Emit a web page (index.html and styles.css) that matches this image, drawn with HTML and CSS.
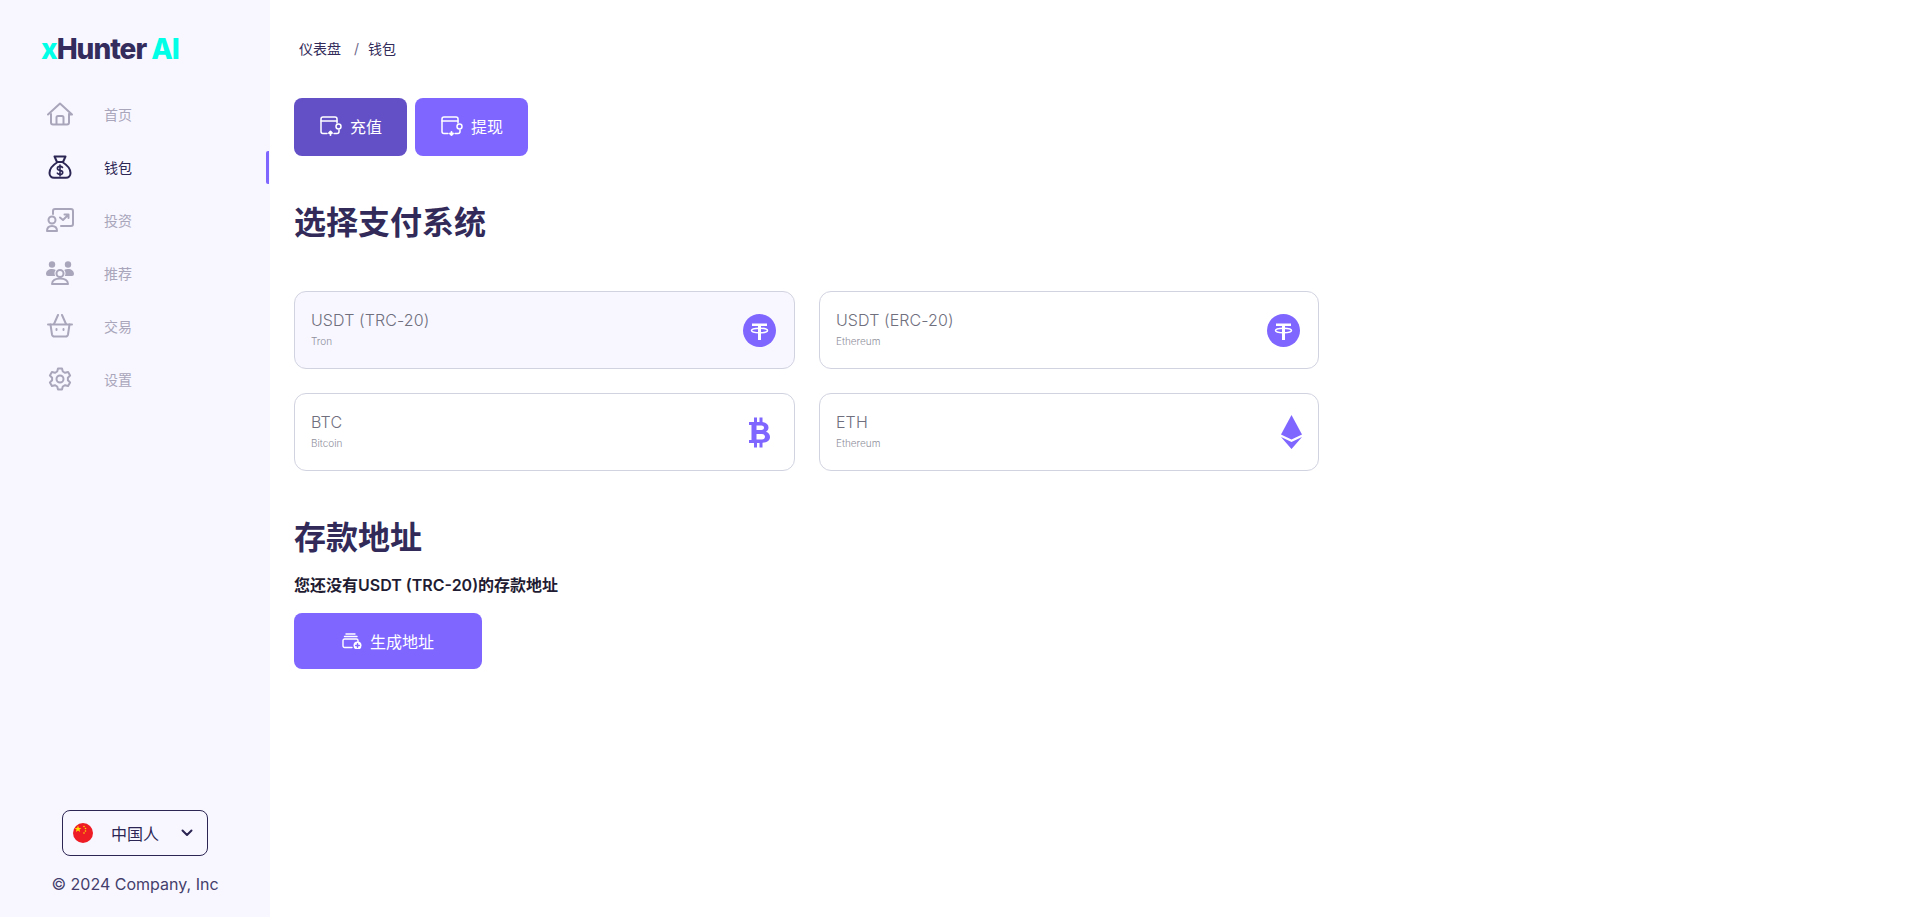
FILE: index.html
```html
<!DOCTYPE html>
<html lang="zh">
<head>
    <meta charset="UTF-8">
    <meta name="viewport" content="width=device-width, initial-scale=1.0">
    <title>xHunter AI - 钱包</title>
    <link rel="stylesheet" href="styles.css">
</head>
<body>
    <aside class="sidebar">
        <div class="logo"><span class="logo-x">x</span>Hunter <span class="logo-ai">AI</span></div>
        <nav class="nav">
            <a class="nav-item">
                <svg class="nav-icon" viewBox="0 0 28 24" fill="none" stroke="currentColor" stroke-width="2" stroke-linejoin="round" stroke-linecap="round">
                    <path d="M2 12.500 14 1.500l12 11h-3"/>
                    <path d="M5 12v8.500a2 2 0 0 0 2 2h14a2 2 0 0 0 2-2V12"/>
                    <path d="M10.500 22v-6.500a1.500 1.500 0 0 1 1.500-1.500h4a1.500 1.500 0 0 1 1.500 1.500V22"/>
                </svg>
                <span>首页</span>
            </a>
            <a class="nav-item active">
                <svg class="nav-icon" viewBox="0 0 28 24" fill="none" stroke="currentColor" stroke-width="2" stroke-linejoin="round" stroke-linecap="round">
                    <path d="M8.500 1.500h11l-2.500 5.500h-6z"/>
                    <path d="M11 7.500C7 10 3.500 14 3.500 18c0 3 2 4.800 4.500 4.800h12c2.500 0 4.500-1.800 4.500-4.800 0-4-3.500-8-7.500-10.500"/>
                    <path d="M16.500 12.500c-.5-.8-1.400-1.100-2.500-1.100-1.500 0-2.600.8-2.600 2 0 2.700 5.300 1.300 5.300 4 0 1.200-1.200 2-2.700 2-1.200 0-2.200-.4-2.700-1.200M14 10v11" stroke-width="1.600"/>
                </svg>
                <span>钱包</span>
            </a>
            <a class="nav-item">
                <svg class="nav-icon" viewBox="0 0 28 24" fill="none" stroke="currentColor" stroke-width="2" stroke-linejoin="round" stroke-linecap="round">
                    <path d="M7 6V3a2 2 0 0 1 2-2h16a2 2 0 0 1 2 2v13a2 2 0 0 1-2 2H15"/>
                    <circle cx="6" cy="12" r="3.500"/>
                    <path d="M1 23c0-3.500 2-5 5-5s5 1.500 5 5z"/>
                    <path d="M14 9.500l3 2.500 5-5M18.500 6.500H22.500V10"/>
                </svg>
                <span>投资</span>
            </a>
            <a class="nav-item">
                <svg class="nav-icon" viewBox="0 0 28 24" fill="currentColor">
                    <circle cx="6" cy="3.500" r="3.200"/>
                    <circle cx="22" cy="3.500" r="3.200"/>
                    <path d="M0 13c0-3 2.500-5 6-5 1.500 0 2.800.4 3.800 1-.9 1-1.300 2.100-1.300 3.500 0 .9.300 1.700.7 2.500H2a2 2 0 0 1-2-2z"/>
                    <path d="M28 13c0-3-2.500-5-6-5-1.500 0-2.800.4-3.800 1 .9 1 1.300 2.100 1.300 3.500 0 .9-.3 1.700-.7 2.500H26a2 2 0 0 0 2-2z"/>
                    <circle cx="14" cy="12.500" r="3.500" fill="none" stroke="currentColor" stroke-width="2"/>
                    <path d="M6 23c0-3.500 3.500-5.500 8-5.500s8 2 8 5.500z" fill="none" stroke="currentColor" stroke-width="2" stroke-linejoin="round"/>
                </svg>
                <span>推荐</span>
            </a>
            <a class="nav-item">
                <svg class="nav-icon" viewBox="0 0 28 24" fill="none" stroke="currentColor" stroke-width="2" stroke-linejoin="round" stroke-linecap="round">
                    <path d="M2 10.500h24"/>
                    <path d="M4.500 10.500 6 20.500a2.500 2.500 0 0 0 2.500 2h11a2.500 2.500 0 0 0 2.500-2l1.500-10"/>
                    <path d="M8 10 12 1M20 10 16 1"/>
                    <path d="M10.500 15v1M17.500 15v1"/>
                </svg>
                <span>交易</span>
            </a>
            <a class="nav-item">
                <svg class="nav-icon" viewBox="0 0 28 24" fill="none" stroke="currentColor" stroke-width="2" stroke-linejoin="round">
                    <circle cx="14" cy="12" r="3.500"/>
                    <path d="M12 1.500h4l.8 3 2.300 1.300 3-.8 2 3.500-2.200 2.200v2.600l2.200 2.200-2 3.500-3-.8-2.300 1.300-.8 3h-4l-.8-3-2.300-1.300-3 .8-2-3.500 2.200-2.200v-2.600L3.900 8.500l2-3.500 3 .8 2.300-1.300z"/>
                </svg>
                <span>设置</span>
            </a>
        </nav>
        <div class="sidebar-footer">
            <button class="lang-select">
                <svg class="flag" viewBox="0 0 20 20">
                    <circle cx="10" cy="10" r="10" fill="#ee1c25"/>
                    <path d="M5 2.500l.9 2.500h2.500l-2 1.500.8 2.500L5 7.500 2.800 9l.8-2.500-2-1.500h2.500z" fill="#ffde00"/>
                    <circle cx="11" cy="3.500" r=".8" fill="#ffde00"/>
                    <circle cx="12.500" cy="5.500" r=".8" fill="#ffde00"/>
                    <circle cx="12.500" cy="8" r=".8" fill="#ffde00"/>
                    <circle cx="11" cy="10" r=".8" fill="#ffde00"/>
                </svg>
                <span class="lang-name">中国人</span>
                <svg class="chevron" viewBox="0 0 12 8" fill="none" stroke="currentColor" stroke-width="2" stroke-linecap="round" stroke-linejoin="round">
                    <path d="M1.500 1.500 6 6l4.500-4.500"/>
                </svg>
            </button>
            <p class="copyright">© 2024 Company, Inc</p>
        </div>
    </aside>

    <main class="content">
        <div class="breadcrumb">
            <span>仪表盘</span>
            <span class="crumb-sep">/</span>
            <span>钱包</span>
        </div>

        <div class="tabs">
            <button class="btn btn-tab btn-dark">
                <svg class="btn-icon" viewBox="0 0 22 20" fill="none" stroke="currentColor" stroke-width="1.500" stroke-linecap="round" stroke-linejoin="round">
                    <path d="M7 17.500H3A2 2 0 0 1 1 15.500V3A2 2 0 0 1 3 1h12a2 2 0 0 1 2 2v4"/>
                    <path d="M1 5h16"/>
                    <path d="M14 17.500h3a2 2 0 0 0 2-2V14"/>
                    <circle cx="18.500" cy="10.500" r="2.500"/>
                    <path d="M10.500 19v-3M9 17l1.500-1.500L12 17" stroke-width="1.800"/>
                </svg>
                <span>充值</span>
            </button>
            <button class="btn btn-tab">
                <svg class="btn-icon" viewBox="0 0 22 20" fill="none" stroke="currentColor" stroke-width="1.500" stroke-linecap="round" stroke-linejoin="round">
                    <path d="M7 17.500H3A2 2 0 0 1 1 15.500V3A2 2 0 0 1 3 1h12a2 2 0 0 1 2 2v4"/>
                    <path d="M1 5h16"/>
                    <path d="M14 17.500h3a2 2 0 0 0 2-2V14"/>
                    <circle cx="18.500" cy="10.500" r="2.500"/>
                    <path d="M10.500 16v3M9 17.500l1.500 1.500 1.500-1.500" stroke-width="1.800"/>
                </svg>
                <span>提现</span>
            </button>
        </div>

        <h2 class="section-title">选择支付系统</h2>

        <div class="pay-grid">
            <div class="pay-card selected">
                <div class="pay-text">
                    <div class="pay-name">USDT (TRC-20)</div>
                    <div class="pay-net">Tron</div>
                </div>
                <svg class="pay-icon" viewBox="0 0 33 33">
                    <circle cx="16.500" cy="16.500" r="16.500" fill="#7f66ff"/>
                    <path d="M9 9.500h15v2.500h-6v14h-3V12H9z" fill="#fff"/>
                    <ellipse cx="16.500" cy="16.500" rx="8" ry="2.300" fill="none" stroke="#fff" stroke-width="1.500"/>
                </svg>
            </div>
            <div class="pay-card">
                <div class="pay-text">
                    <div class="pay-name">USDT (ERC-20)</div>
                    <div class="pay-net">Ethereum</div>
                </div>
                <svg class="pay-icon" viewBox="0 0 33 33">
                    <circle cx="16.500" cy="16.500" r="16.500" fill="#7f66ff"/>
                    <path d="M9 9.500h15v2.500h-6v14h-3V12H9z" fill="#fff"/>
                    <ellipse cx="16.500" cy="16.500" rx="8" ry="2.300" fill="none" stroke="#fff" stroke-width="1.500"/>
                </svg>
            </div>
            <div class="pay-card">
                <div class="pay-text">
                    <div class="pay-name">BTC</div>
                    <div class="pay-net">Bitcoin</div>
                </div>
                <svg class="pay-icon" viewBox="0 0 33 33">
                    <path fill-rule="evenodd" d="M11 1.500h3V6h2.500V1.500h3V6c4 .6 6 2.800 6 5.500 0 2-1 3.500-2.500 4.300 2.500.8 4 2.700 4 5.200 0 3.500-2.700 5.500-7.500 5.800v4.700h-3V27H14v4.500h-3V27H6v-3h2.500V9H6V6h5zM13.500 9.500V14h5c1.500 0 2.500-1 2.500-2.250S20 9.500 18.500 9.500zM13.500 18v5.500H19c1.700 0 3-1.200 3-2.750S20.700 18 19 18z" fill="#7f66ff"/>
                </svg>
            </div>
            <div class="pay-card">
                <div class="pay-text">
                    <div class="pay-name">ETH</div>
                    <div class="pay-net">Ethereum</div>
                </div>
                <svg class="pay-icon eth" viewBox="0 0 21 34">
                    <path d="M10.500 0 21 19.500 10.500 24.500 0 19.500z" fill="#7f66ff"/>
                    <path d="M0 22 10.500 27 21 22 10.500 34z" fill="#7f66ff"/>
                </svg>
            </div>
        </div>

        <h2 class="section-title">存款地址</h2>
        <p class="notice">您还没有USDT (TRC-20)的存款地址</p>
        <button class="btn btn-generate">
            <svg class="btn-icon-sm" viewBox="0 0 20 16" fill="none" stroke="currentColor" stroke-width="1.400" stroke-linecap="round" stroke-linejoin="round">
                <path d="M4 1h9M2.500 3.500H15"/>
                <path d="M10 14.500H2.500A1.500 1.500 0 0 1 1 13V7.500A1.500 1.500 0 0 1 2.500 6h12A1.500 1.500 0 0 1 16 7.500V9"/>
                <circle cx="15.500" cy="12.500" r="4" fill="#fff" stroke="none"/>
                <path d="M15.500 10.700v3.600M13.700 12.500h3.600" stroke="#7f66ff"/>
            </svg>
            <span>生成地址</span>
        </button>
    </main>
</body>
</html>
```

FILE: styles.css
```css
* {
    box-sizing: border-box;
}

body {
    margin: 0;
    height: 100vh;
    display: flex;
    background-color: #fff;
    color: #322b5a;
    font-family: Inter, 'Noto Sans CJK SC', sans-serif;
    overflow: hidden;
}

button {
    font-family: inherit;
    cursor: pointer;
}

/* 侧边栏 */
.sidebar {
    width: 270px;
    flex-shrink: 0;
    background-color: #f8f7ff;
    display: flex;
    flex-direction: column;
}

.logo {
    margin: 31px 0 0 41px;
    height: 36px;
    font-family: Inter, sans-serif;
    font-size: 28px;
    font-weight: 800;
    line-height: 36px;
    letter-spacing: -1px;
    color: #332c5c;
    white-space: nowrap;
}

.logo-x,
.logo-ai {
    color: #00ffe6;
}

.nav {
    margin-top: 20px;
    display: flex;
    flex-direction: column;
}

.nav-item {
    height: 53px;
    padding-left: 46px;
    display: flex;
    align-items: center;
    gap: 30px;
    font-size: 14px;
    color: #a9a6bb;
    position: relative;
}

.nav-icon {
    width: 28px;
    height: 24px;
    flex-shrink: 0;
}

.nav-item.active {
    color: #2c2654;
}

.nav-item.active::after {
    content: '';
    position: absolute;
    right: 1px;
    top: 11px;
    width: 3px;
    height: 33px;
    border-radius: 2px 0 0 2px;
    background-color: #7f66ff;
}

.sidebar-footer {
    margin-top: auto;
    padding-bottom: 22px;
    display: flex;
    flex-direction: column;
    align-items: center;
}

.lang-select {
    width: 146px;
    height: 46px;
    padding: 0 14px 0 10px;
    display: flex;
    align-items: center;
    background: none;
    border: 1px solid #2c2654;
    border-radius: 8px;
    color: #2c2654;
    font-size: 16px;
}

.flag {
    width: 20px;
    height: 20px;
}

.lang-name {
    margin-left: 18px;
}

.chevron {
    width: 12px;
    height: 8px;
    margin-left: auto;
}

.copyright {
    margin: 17px 0 0;
    font-size: 16px;
    line-height: 22px;
    color: #443e6c;
}

/* 主内容 */
.content {
    flex: 1;
    padding: 39px 24px 0;
}

.breadcrumb {
    padding-left: 5px;
    display: flex;
    font-size: 14px;
    line-height: 20px;
    color: #322b5a;
}

.crumb-sep {
    margin: 0 9px 0 13px;
    color: #6f6a8c;
}

.tabs {
    margin-top: 39px;
    display: flex;
    gap: 8px;
}

.btn {
    display: flex;
    align-items: center;
    justify-content: center;
    border: none;
    border-radius: 8px;
    background-color: #7f66ff;
    color: #fff;
    font-size: 16px;
}

.btn-tab {
    width: 113px;
    height: 58px;
    padding: 0 0 2px 1px;
    gap: 8px;
}

.btn-dark {
    background-color: #6350c7;
}

.btn-icon {
    width: 22px;
    height: 20px;
}

.btn-icon-sm {
    width: 20px;
    height: 16px;
}

.section-title {
    margin: 48px 0 0;
    font-size: 32px;
    font-weight: 700;
    line-height: 38px;
    color: #322b5a;
}

.pay-grid {
    width: 1025px;
    margin-top: 49px;
    display: grid;
    grid-template-columns: 501px 500px;
    grid-auto-rows: 78px;
    gap: 24px;
}

.pay-card {
    padding: 0 18px 2px 16px;
    display: flex;
    align-items: center;
    justify-content: space-between;
    border: 1px solid #d1d3e0;
    border-radius: 12px;
    background-color: #fff;
}

.pay-card.selected {
    background-color: #f8f7ff;
}

.pay-name {
    font-size: 16px;
    font-weight: 300;
    line-height: 20px;
    letter-spacing: 0.1px;
    color: #6f6f7e;
}

.pay-net {
    margin-top: 4px;
    font-size: 10px;
    font-weight: 300;
    line-height: 14px;
    color: #8f8f9c;
}

.pay-icon {
    width: 33px;
    height: 33px;
    margin-top: 2px;
}

.pay-icon.eth {
    width: 21px;
    height: 34px;
    margin-right: -2px;
}

.notice {
    margin: 17px 0 0;
    font-size: 16px;
    font-weight: 600;
    line-height: 22px;
    color: #1f1c33;
}

.btn-generate {
    width: 188px;
    height: 56px;
    margin-top: 17px;
    gap: 8px;
}
```
